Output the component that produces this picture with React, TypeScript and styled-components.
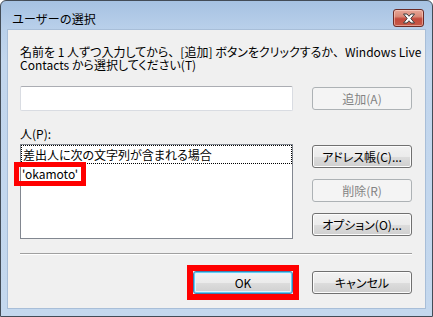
import React from 'react';
import styled, { createGlobalStyle } from 'styled-components';

const GlobalStyle = createGlobalStyle`
  html, body {
    margin: 0;
    padding: 0;
    background: #ffffff;
  }
  body {
    font-family: "Noto Sans CJK JP", "Noto Sans", sans-serif;
    font-size: 12px;
    color: #000;
  }
`;

const Window = styled.div`
  width: 433px;
  height: 317px;
  box-sizing: border-box;
  border: 1px solid #434c57;
  border-radius: 6px 6px 0 0;
  background: linear-gradient(180deg, #a6c2e2 0px, #b9d0ea 28px, #c2d6ed 60px, #c4d8ee 100%);
  display: flex;
  flex-direction: column;
  overflow: hidden;
`;

const TitleBar = styled.div`
  height: 29px;
  flex: none;
  display: flex;
  align-items: flex-start;
  justify-content: space-between;
  padding: 0 8px 0 11px;
`;

const Title = styled.div`
  margin-top: 10px;
  line-height: 15px;
  font-size: 12px;
  color: #000;
`;

const CloseButton = styled.div`
  margin-top: 8px;
  width: 31px;
  height: 18px;
  box-sizing: border-box;
  border: 1px solid #6b2b26;
  border-radius: 3px;
  background: linear-gradient(180deg, #e8a797 0%, #d98a78 40%, #c44a3c 55%, #c65a48 100%);
  box-shadow: inset 0 0 0 1px rgba(255, 220, 210, 0.5);
  display: flex;
  align-items: center;
  justify-content: center;
`;

const Client = styled.div`
  flex: 1;
  margin: 0 7px 8px 7px;
  background: #f0f0f0;
  box-shadow: 0 0 0 1px #a8bed8;
  display: flex;
  flex-direction: column;
  padding: 15px 13px 0 12px;
`;

const Instructions = styled.div`
  line-height: 13px;
  font-feature-settings: "palt";
  white-space: nowrap;
`;

// the ideographic comma keeps its full width, as in the original dialog font
const Comma = styled.span`
  display: inline-block;
  height: 13px;
  line-height: 13px;
  font-feature-settings: normal;
`;

const Row = styled.div<{ $top: number; $align?: string }>`
  display: flex;
  gap: 19px;
  margin-top: ${p => p.$top}px;
  align-items: ${p => p.$align || 'flex-start'};
  justify-content: space-between;
`;

const TextBox = styled.div`
  width: 273px;
  height: 25px;
  box-sizing: border-box;
  background: #fff;
  border: 1px solid #d9dce2;
  border-top-color: #abadb3;
  border-radius: 2px;
`;

const Label = styled.div`
  margin-top: 16px;
  line-height: 13px;
  font-feature-settings: "palt";
`;

const ListBox = styled.div`
  width: 273px;
  height: 95px;
  box-sizing: border-box;
  background: #fff;
  border: 1px solid #828790;
  display: flex;
  flex-direction: column;
`;

const ListItem = styled.div<{ $focused?: boolean }>`
  height: 19px;
  line-height: 17px;
  box-sizing: border-box;
  border: 1px dotted ${p => (p.$focused ? '#000' : 'transparent')};
  padding-left: 1px;
  white-space: nowrap;
  font-feature-settings: "palt";
`;

const Marked = styled.span`
  display: inline-block;
  line-height: 14px;
  padding: 0 3px 0 3px;
  margin-left: -4px;
  outline: 5px solid #ff0000;
  outline-offset: 0;
`;

const ButtonColumn = styled.div`
  display: flex;
  flex-direction: column;
  gap: 11px;
  padding-top: 1px;
`;

const Button = styled.button<{ $isDefault?: boolean; $marked?: boolean }>`
  position: relative;
  width: 100px;
  height: 23px;
  box-sizing: border-box;
  padding: 0;
  margin: 0;
  font-family: "Noto Sans CJK JP", "Noto Sans", sans-serif;
  font-size: 12px;
  font-feature-settings: "palt";
  color: #000;
  border: 1px solid ${p => (p.$isDefault ? '#3c7fb1' : '#707070')};
  border-radius: 3px;
  background: linear-gradient(180deg, #f2f2f2 0%, #ebebeb 50%, #dddddd 51%, #cfcfcf 100%);
  box-shadow: ${p => (p.$isDefault ? 'inset 0 0 0 1px #62cdf4, inset 0 0 0 2px #e4f4fb' : 'inset 0 0 0 1px #fcfcfc')};

  &::after {
    content: '';
    display: ${p => (p.$marked ? 'block' : 'none')};
    position: absolute;
    inset: -7px;
    border: 6px solid #ff0000;
  }

  &:disabled {
    border-color: #adb2b5;
    background: #f4f4f4;
    color: #838383;
    box-shadow: none;
  }
`;

const Separator = styled.div`
  margin-top: 14px;
  height: 1px;
  background: #a0a0a0;
  border-bottom: 1px solid #ffffff;
`;

const Footer = styled.div`
  display: flex;
  justify-content: flex-end;
  gap: 19px;
  margin-top: 16px;
`;

const CloseGlyph = () => (
  <svg width="14" height="11" viewBox="0 0 14 11">
    <path
      d="M1.5 1 L5 1 L7 3.3 L9 1 L12.5 1 L8.8 5.5 L12.5 10 L9 10 L7 7.7 L5 10 L1.5 10 L5.2 5.5 Z"
      fill="#ffffff"
      stroke="#3d3d3d"
      strokeWidth="1"
      strokeLinejoin="round"
    />
  </svg>
);

export default function App() {
  return (
    <>
      <GlobalStyle />
      <Window>
        <TitleBar>
          <Title>ユーザーの選択</Title>
          <CloseButton>
            <CloseGlyph />
          </CloseButton>
        </TitleBar>
        <Client>
          <Instructions>
            名前を 1 人ずつ入力してから<Comma>、</Comma>[追加] ボタンをクリックするか<Comma>、</Comma>Windows Live
            <br />
            Contacts から選択してください(T)
          </Instructions>
          <Row $top={15} $align="center">
            <TextBox />
            <Button disabled>追加(A)</Button>
          </Row>
          <Label>人(P):</Label>
          <Row $top={4}>
            <ListBox>
              <ListItem $focused>差出人に次の文字列が含まれる場合</ListItem>
              <ListItem>
                <Marked>'okamoto'</Marked>
              </ListItem>
            </ListBox>
            <ButtonColumn>
              <Button>アドレス帳(C)...</Button>
              <Button disabled>削除(R)</Button>
              <Button>オプション(O)...</Button>
            </ButtonColumn>
          </Row>
          <Separator />
          <Footer>
            <Button $isDefault $marked>OK</Button>
            <Button>キャンセル</Button>
          </Footer>
        </Client>
      </Window>
    </>
  );
}
